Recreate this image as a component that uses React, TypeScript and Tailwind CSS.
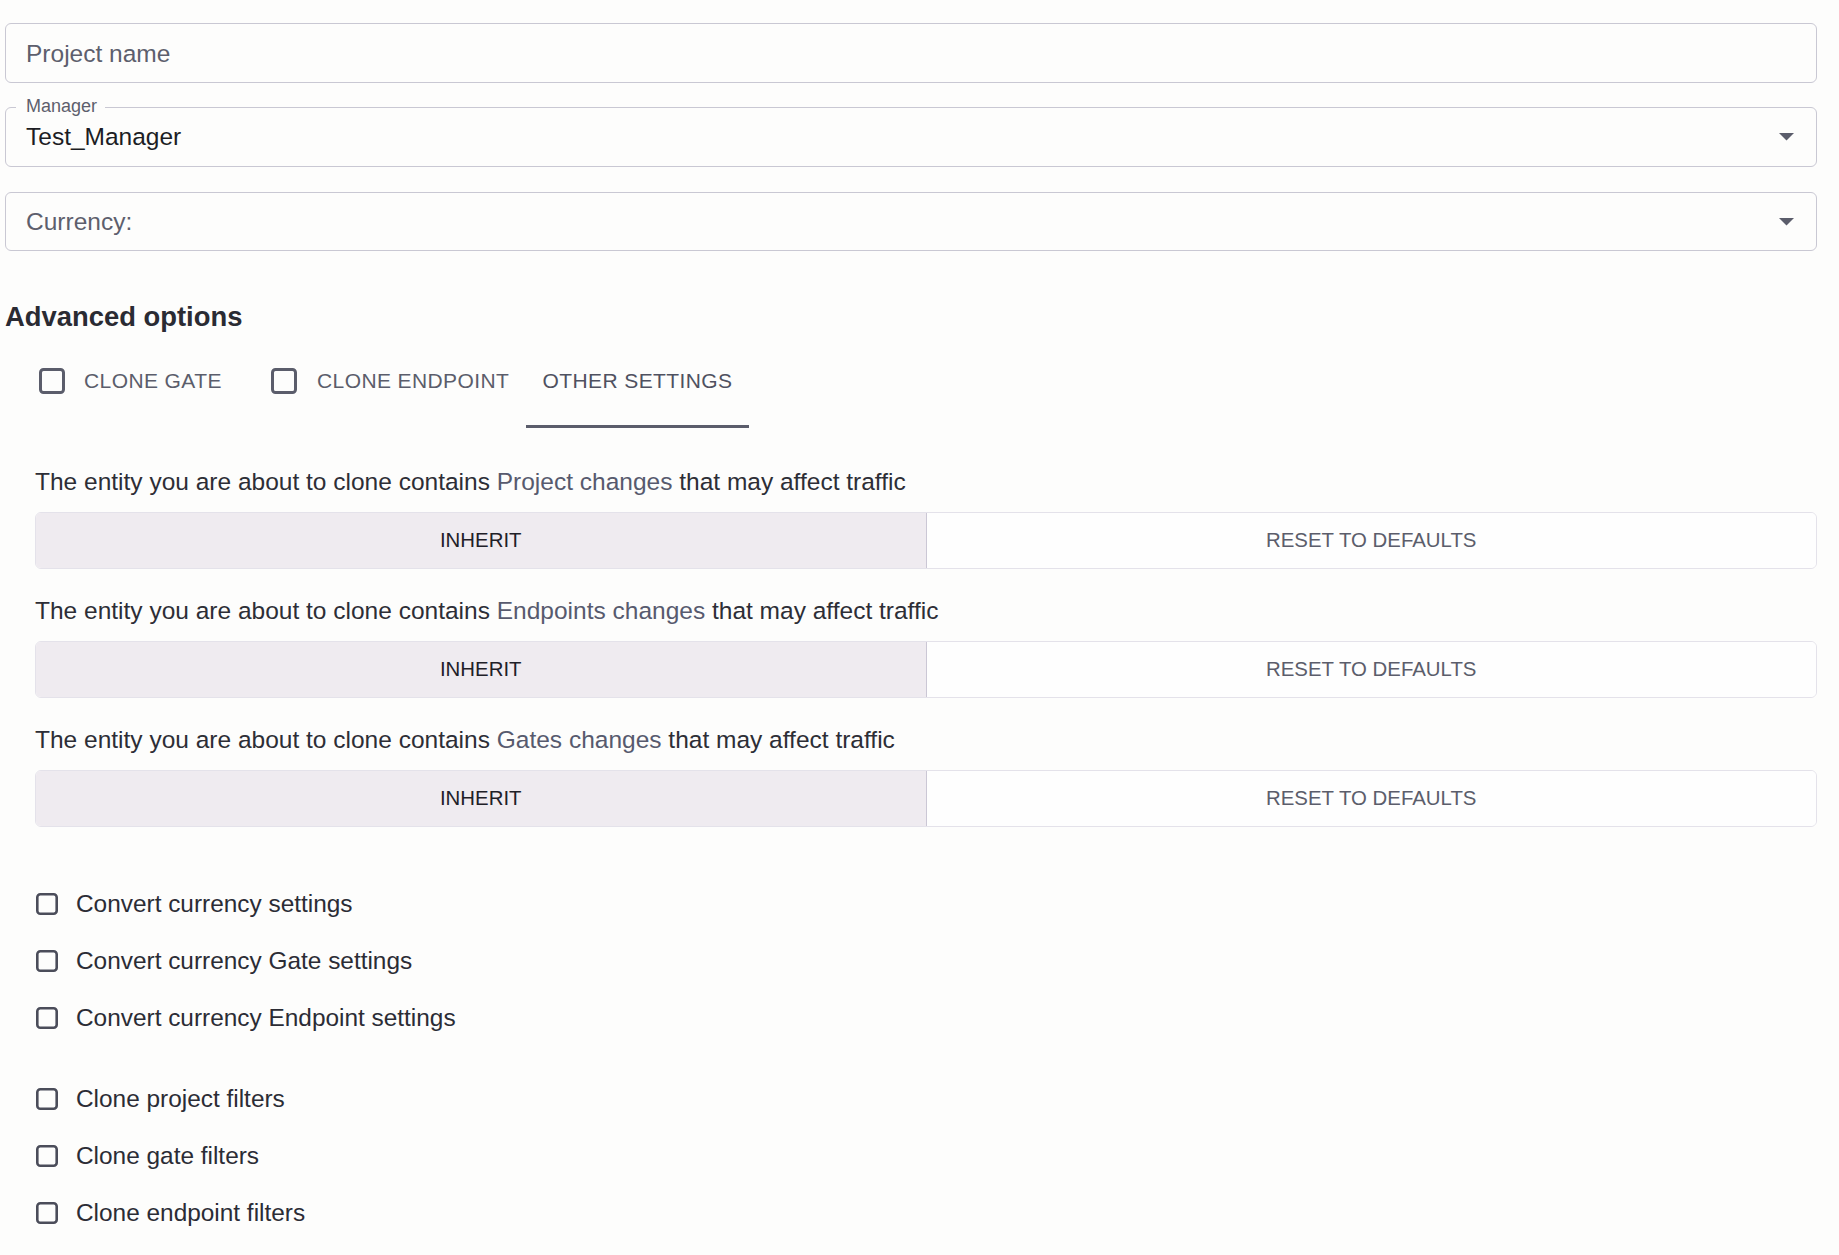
import React from "react";

function OutlineBox({ size, stroke, color }: { size: number; stroke: number; color: string }) {
  return (
    <svg width={size} height={size} viewBox={`0 0 ${size} ${size}`} className="shrink-0">
      <rect
        x={stroke / 2}
        y={stroke / 2}
        width={size - stroke}
        height={size - stroke}
        rx={3}
        fill="none"
        stroke={color}
        strokeWidth={stroke}
      />
    </svg>
  );
}

function Caret() {
  return (
    <svg width="15" height="8" viewBox="0 0 15 8" className="shrink-0">
      <polygon points="0,0 15,0 7.5,7.5" fill="#5b5d6b" />
    </svg>
  );
}

function ChangeBlock({ subject }: { subject: string }) {
  return (
    <div className="flex flex-col">
      <p className="text-[24.5px] leading-[28px] text-[#2d2e36]">
        The entity you are about to clone contains{" "}
        <span className="text-[#575a6e]">{subject} changes</span> that may affect traffic
      </p>
      <div className="mt-[16px] flex h-[57px] overflow-hidden rounded-[6px] border border-[#e4e2ea]">
        <button className="flex flex-1 items-center justify-center border-r border-[#cbc7d5] bg-[#efebf0] text-[20.4px] text-[#1f2028]">
          INHERIT
        </button>
        <button className="flex flex-1 items-center justify-center bg-[#fefefe] text-[20.4px] text-[#5b5d6b]">
          RESET TO DEFAULTS
        </button>
      </div>
    </div>
  );
}

function OptionRow({ label }: { label: string }) {
  return (
    <label className="flex h-[57px] items-center">
      <OutlineBox size={22} stroke={2.6} color="#4b4d5a" />
      <span className="ml-[18px] text-[24.4px] leading-[28px] text-[#2b2c35]">{label}</span>
    </label>
  );
}

export default function App() {
  return (
    <div
      className="min-h-screen w-full bg-[#fdfdfc] pb-[14px] pl-[5px] pr-[22px] pt-[23px]"
      style={{ fontFamily: '"Liberation Sans", Arial, sans-serif' }}
    >
      {/* Project name */}
      <div className="flex h-[60px] items-center rounded-[6px] border border-[#c9c8d3] px-[20px] pt-[2px]">
        <span className="text-[24.5px] leading-[28px] text-[#5d5f6d]">Project name</span>
      </div>

      {/* Manager select */}
      <div className="relative mt-[24px] flex h-[60px] items-center justify-between rounded-[6px] border border-[#c9c8d3] pl-[20px] pr-[22px]">
        <span className="absolute -top-[11px] left-[10px] bg-[#fdfdfc] pl-[10px] pr-[8px] text-[18px] leading-[18px] text-[#5d5f6d]">
          Manager
        </span>
        <span className="text-[24.5px] leading-[28px] text-[#1c1d24]">Test_Manager</span>
        <Caret />
      </div>

      {/* Currency select */}
      <div className="mt-[25px] flex h-[59px] items-center justify-between rounded-[6px] border border-[#c9c8d3] pl-[20px] pr-[22px]">
        <span className="text-[24.5px] leading-[28px] text-[#5d5f6d]">Currency:</span>
        <Caret />
      </div>

      <h2 className="mt-[50px] text-[27.4px] font-bold leading-[32px] text-[#2a2b33]">Advanced options</h2>

      {/* Tabs */}
      <div className="ml-[16px] mt-[23px] flex h-[72px]">
        <div className="flex w-[232px] items-start px-[18px] pt-[12px]">
          <div className="flex h-[26px] items-center whitespace-nowrap">
            <OutlineBox size={26} stroke={3} color="#5b5d6b" />
            <span className="ml-[19px] text-[21px] leading-[26px] tracking-[0.4px] text-[#5b5d6b]">CLONE GATE</span>
          </div>
        </div>
        <div className="flex w-[273px] items-start px-[18px] pt-[12px]">
          <div className="flex h-[26px] items-center whitespace-nowrap">
            <OutlineBox size={26} stroke={3} color="#5b5d6b" />
            <span className="ml-[20px] text-[21px] leading-[26px] tracking-[0.4px] text-[#5b5d6b]">CLONE ENDPOINT</span>
          </div>
        </div>
        <div className="flex w-[223px] items-start justify-center whitespace-nowrap border-b-[3px] border-[#5b5d6b] pt-[12px]">
          <span className="text-[21px] leading-[26px] tracking-[0.4px] text-[#4f5160]">OTHER SETTINGS</span>
        </div>
      </div>

      {/* Other settings panel */}
      <div className="mt-[40px] flex flex-col gap-[28px] pl-[30px]">
        <ChangeBlock subject="Project" />
        <ChangeBlock subject="Endpoints" />
        <ChangeBlock subject="Gates" />
      </div>

      <div className="mt-[48px] flex flex-col pl-[31px]">
        <OptionRow label="Convert currency settings" />
        <OptionRow label="Convert currency Gate settings" />
        <OptionRow label="Convert currency Endpoint settings" />
      </div>

      <div className="mt-[24px] flex flex-col pl-[31px]">
        <OptionRow label="Clone project filters" />
        <OptionRow label="Clone gate filters" />
        <OptionRow label="Clone endpoint filters" />
      </div>
    </div>
  );
}
